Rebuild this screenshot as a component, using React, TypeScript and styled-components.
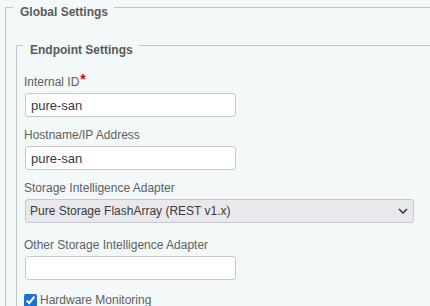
import React from 'react';
import styled, { createGlobalStyle } from 'styled-components';

const GlobalStyle = createGlobalStyle`
  html, body {
    margin: 0;
    padding: 0;
    background: #f3f9f9;
    font-family: 'Liberation Sans', Arial, sans-serif;
    overflow: hidden;
  }
`;

const App = () => {
  return (
    <>
      <GlobalStyle />
      <Page>
        <Panel $top={7} $left={5}>
          <Legend>Global Settings</Legend>
          <Panel $top={26} $left={10}>
            <Legend $inner>Endpoint Settings</Legend>
            <Fields>
              <Field>
                <Label>
                  Internal ID<Required>*</Required>
                </Label>
                <TextInput defaultValue="pure-san" />
              </Field>
              <Field>
                <Label>Hostname/IP Address</Label>
                <TextInput defaultValue="pure-san" />
              </Field>
              <Field $gap={15}>
                <Label>Storage Intelligence Adapter</Label>
                <SelectWrap>
                  <Select defaultValue="pure">
                    <option value="pure">Pure Storage FlashArray (REST v1.x)</option>
                  </Select>
                  <Chevron width="10" height="6" viewBox="0 0 10 6">
                    <path d="M1 1l4 4 4-4" fill="none" stroke="#333" strokeWidth="1.5" />
                  </Chevron>
                </SelectWrap>
              </Field>
              <Field $gap={13}>
                <Label>Other Storage Intelligence Adapter</Label>
                <TextInput defaultValue="" />
              </Field>
              <CheckRow>
                <Check type="checkbox" defaultChecked />
                <CheckLabel>Hardware Monitoring</CheckLabel>
              </CheckRow>
            </Fields>
          </Panel>
        </Panel>
      </Page>
    </>
  );
};

const Page = styled.div`
  width: 100%;
  overflow: hidden;
`;

const Panel = styled.div<{ $top: number; $left: number }>`
  margin: ${(p) => p.$top}px 0 0 ${(p) => p.$left}px;
  border-top: 1px solid #c4c6c6;
  border-left: 1px solid #c4c6c6;
  display: flex;
  flex-direction: column;
  align-items: flex-start;
  align-self: stretch;
`;

const Legend = styled.div<{ $inner?: boolean }>`
  margin: -3px 0 0 ${(p) => (p.$inner ? 6 : 7)}px;
  padding: 0 6px 0 7px;
  background: #f3f9f9;
  font-size: 12px;
  line-height: 14px;
  font-weight: bold;
  color: #595959;
`;

const Fields = styled.div`
  display: flex;
  flex-direction: column;
  padding: 15px 0 0 7px;
`;

const Field = styled.div<{ $gap?: number }>`
  display: flex;
  flex-direction: column;
  margin-bottom: ${(p) => p.$gap ?? 11}px;
`;

const Label = styled.label`
  display: block;
  font-size: 12px;
  line-height: 14px;
  color: #606060;
  margin-bottom: 4px;
`;

const Required = styled.span`
  color: #d8001f;
  font-weight: bold;
  font-size: 14px;
  line-height: 14px;
  vertical-align: 2px;
  margin-left: 1px;
`;

const TextInput = styled.input`
  box-sizing: border-box;
  width: 211px;
  height: 24px;
  margin: 0 0 0 1px;
  padding: 0 5px;
  border: 1px solid #c8c8c8;
  border-radius: 3px;
  background: #fff;
  font-family: 'Liberation Sans', Arial, sans-serif;
  font-size: 13px;
  color: #3a3a3a;
  outline: none;
`;

const SelectWrap = styled.div`
  position: relative;
  width: 389px;
  margin-left: 1px;
`;

const Select = styled.select`
  box-sizing: border-box;
  width: 100%;
  height: 24px;
  margin: 0;
  padding: 0 20px 0 4px;
  appearance: none;
  border: 1px solid #c8c8cc;
  border-radius: 3px;
  background: #e9e9ed;
  font-family: 'Liberation Sans', Arial, sans-serif;
  font-size: 12px;
  color: #3a3a3a;
  outline: none;
`;

const Chevron = styled.svg`
  position: absolute;
  right: 6px;
  top: 9px;
  pointer-events: none;
`;

const CheckRow = styled.div`
  display: flex;
  align-items: center;
  gap: 3px;
  margin-top: 0;
`;

const Check = styled.input`
  width: 13px;
  height: 13px;
  margin: 0;
  accent-color: #1a6fd8;
`;

const CheckLabel = styled.span`
  font-size: 12px;
  line-height: 14px;
  color: #606060;
`;

export default App;
